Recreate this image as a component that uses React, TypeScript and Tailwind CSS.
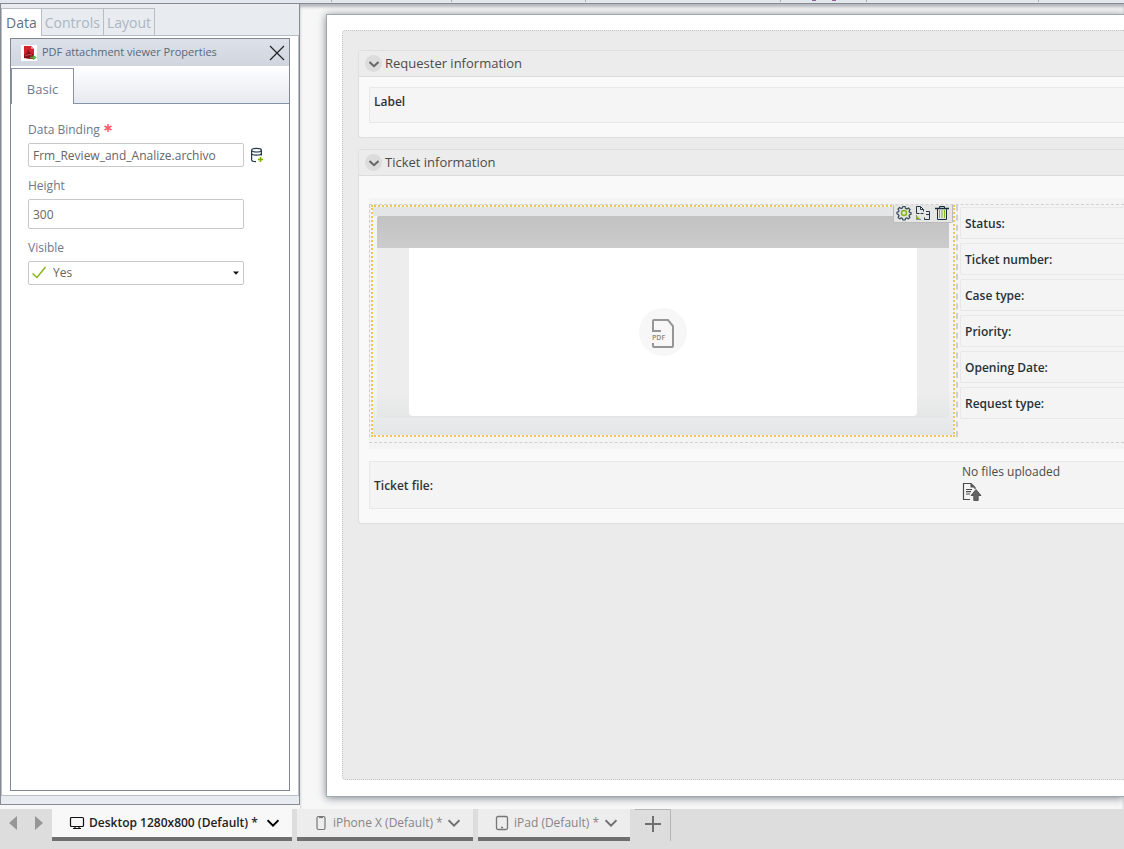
import React, { useState } from 'react';

const TICKET_FIELDS = ['Status:', 'Ticket number:', 'Case type:', 'Priority:', 'Opening Date:', 'Request type:'];

const Chevron = () => (
    <svg className="h-3 w-3" viewBox="0 0 12 12" fill="none" stroke="currentColor" strokeWidth="2">
        <path d="M0.5 3.2 6 8.7l5.5-5.5" />
    </svg>
);

const PdfFileIcon = () => (
    <svg className="h-4 w-4 bg-white" viewBox="0 0 16 16">
        <path d="M3 1h7l3 3v9l-3 1-7-1z" fill="#d3222b" />
        <path d="M10 1v3h3z" fill="#e98b8b" />
        <path d="M3 10c3-1 4-4 4-6 1 3 3 5 6 6v4l-10-1z" fill="#7d1218" />
        <path d="M4 11c2-1 4-2 7-1" stroke="#e0525a" fill="none" />
        <path d="M9 12.500h4M12 10.500l2.500 2-2.500 2" stroke="#4fae3a" strokeWidth="1.500" fill="none" />
    </svg>
);

const DatabaseAddIcon = () => (
    <svg className="h-4 w-4" viewBox="0 0 16 16" fill="none" stroke="#24384a" strokeWidth="1.200">
        <ellipse cx="6.500" cy="3.200" rx="4.900" ry="1.800" />
        <path d="M1.600 3.200v9.500c0 1 1.800 1.900 4.400 1.900M11.400 3.200v5.300M1.600 6.300c0 1 2.200 1.900 4.900 1.900s4.900-.9 4.900-1.900" />
        <path d="M10.500 10v5M8 12.500h5" stroke="#76b000" strokeWidth="1.500" />
    </svg>
);

const GearIcon = () => (
    <svg className="h-4 w-4" viewBox="0 0 16 16" fill="none" stroke="#34495a" strokeWidth="1.200">
        <path d="M6.900 1.500h2.200l.4 1.900 1.300.6 1.700-1 1.500 1.500-1 1.700.5 1.100 1.500.4v1.500l-1.500.5-.5 1.200.9 1.500-1.400 1.400-1.700-.9-1.200.6-.5 1.500H6.900l-.5-1.500-1.200-.6-1.700.9-1.400-1.400.9-1.500-.5-1.200L1 8.700V7.300l1.500-.5.5-1.100-1-1.700 1.500-1.500 1.700 1 1.300-.6z" />
        <circle cx="8" cy="8" r="2.500" stroke="#86b817" strokeWidth="1.500" />
    </svg>
);

const SwapIcon = () => (
    <svg className="h-4 w-4" viewBox="0 0 16 16" fill="none" stroke="#24384a">
        <path d="M4.500 8.500h-3v-7h4l3 3v2M5.500 1.500v3h3" />
        <path d="M11 6.500h3.500v8h-5v-2M11 9.500h3.500M5.500 8.500h3" />
        <path d="M1.500 10.500v4H6" strokeDasharray="1 1" />
        <path d="M1.500 14v-3.500l3.500 3.500z" fill="#86b817" stroke="none" />
    </svg>
);

const TrashIcon = () => (
    <svg className="h-4 w-4" viewBox="0 0 16 16" fill="none" stroke="#17303f">
        <path d="M1 3.500h14" strokeWidth="1.500" />
        <path d="M5.500 3V1.500h5V3M3.500 4v10.500h9V4" />
        <path d="M5.500 5v8M8 5v8M10.500 5v8" stroke="#86b817" />
    </svg>
);

const UploadIcon = () => (
    <svg className="h-5 w-5" viewBox="0 0 20 20" fill="none" stroke="#4a4a4a" strokeWidth="1.200">
        <path d="M8 17.500H1.500v-16h7.500l4 4v1.500" />
        <path d="M8.500 1.500v4h4.500z" fill="#555" stroke="none" />
        <path d="M4 7.500h6M4 9.700h5M4 12h4" />
        <path d="M14 7.500l5 6h-2.800v5h-4.400v-5H9z" fill="#666" stroke="#444" strokeWidth="0.800" />
    </svg>
);

const PdfPlaceholderIcon = () => (
    <svg className="h-8 w-8" viewBox="0 0 32 32" fill="none" stroke="#969696" strokeWidth="2">
        <path d="M14 15H6V5q0-1 1-1h14l5 6v20q0 1-1 1H7q-1 0-1-1v-3" />
        <text x="5" y="24" fontSize="7" fontWeight="600" fill="#888" stroke="none" fontFamily="Open Sans">
            PDF
        </text>
    </svg>
);

interface SectionProps {
    title: string;
    children: React.ReactNode;
}

const Section = ({ title, children }: SectionProps) => {
    const [open, setOpen] = useState(true);

    return (
        <section className="rounded-l border border-r-0 border-[#dfdfdf] bg-[#f9f9f9]">
            <h2 className={open ? 'border-b border-[#dcdcdc] bg-[#ececec]' : 'bg-[#ececec]'}>
                <button
                    className="flex h-[25px] items-center gap-[3px] pl-[6px] text-[13px] text-[#4b4b4b]"
                    aria-expanded={open}
                    onClick={() => setOpen(!open)}
                >
                    <span className="flex h-[17px] w-[17px] items-center justify-center rounded-full bg-[#dcdcdc]">
                        <svg className="h-[10px] w-[10px]" viewBox="0 0 10 10" fill="none" stroke="#666" strokeWidth="2">
                            <path d="M0.500 3 5 7.200 9.500 3" />
                        </svg>
                    </span>
                    {title}
                </button>
            </h2>
            {open && children}
        </section>
    );
};

const PropertiesPanel = () => {
    const [binding, setBinding] = useState('Frm_Review_and_Analize.archivo');
    const [height, setHeight] = useState('300');

    return (
        <div className="flex flex-1 flex-col border border-[#83878f] bg-white">
            <div className="flex h-[27px] items-center bg-linear-to-b from-[#dde1e9] to-[#d0d5df] pr-1 pl-[10px]">
                <PdfFileIcon />
                <h1 className="flex-1 pl-[5px] text-[11px] text-[#59687a]">PDF attachment viewer Properties</h1>
                <button aria-label="Close">
                    <svg className="h-4 w-4" viewBox="0 0 16 16" stroke="#222" strokeWidth="1.200">
                        <path d="M1 1l14 14M15 1 1 15" />
                    </svg>
                </button>
            </div>
            <div className="flex h-[38px] border-b border-[#8791a8] bg-linear-to-b from-white to-[#e6e9f0] pt-[2px]">
                <button className="-mb-px w-[63px] border border-b-0 border-[#8791a8] bg-white pt-[6px] text-[13px] text-[#6b7b90]">
                    Basic
                </button>
            </div>
            <form className="flex flex-col gap-[9px] px-[17px] pt-4 text-[12px] text-[#6e7887]">
                <div className="flex flex-col gap-[3px]">
                    <label htmlFor="binding" className="flex h-5 items-center gap-1">
                        Data Binding
                        <svg className="mb-1 h-2 w-2" viewBox="0 0 8 8" stroke="#fb5a6c" strokeWidth="1.500">
                            <path d="M4 0v8M0.500 2l7 4M7.500 2l-7 4" />
                        </svg>
                    </label>
                    <div className="flex items-center gap-[6px]">
                        <input
                            id="binding"
                            className="h-6 w-[216px] rounded-xs border border-[#c9c9c9] px-1 text-[#666]"
                            value={binding}
                            onChange={e => setBinding(e.target.value)}
                        />
                        <button type="button" aria-label="Select data binding">
                            <DatabaseAddIcon />
                        </button>
                    </div>
                </div>
                <div className="flex flex-col gap-[3px]">
                    <label htmlFor="height" className="h-5 leading-5">Height</label>
                    <input
                        id="height"
                        className="h-[30px] w-[216px] rounded-xs border border-[#c9c9c9] px-1 text-[#666]"
                        value={height}
                        onChange={e => setHeight(e.target.value)}
                    />
                </div>
                <div className="flex flex-col gap-[3px]">
                    <label htmlFor="visible" className="h-5 leading-5">Visible</label>
                    <div className="relative w-[216px]">
                        <select
                            id="visible"
                            className="block h-6 w-full appearance-none rounded-xs border border-[#c9c9c9] bg-white pl-6 text-[#666]"
                        >
                            <option>Yes</option>
                            <option>No</option>
                        </select>
                        <svg className="pointer-events-none absolute top-1 left-1 h-4 w-4" viewBox="0 0 16 16" fill="none" stroke="#86b817" strokeWidth="1.500">
                            <path d="M0.500 8.500 5 12.500 13.500 2" />
                        </svg>
                        <svg className="pointer-events-none absolute top-[10px] right-1 h-1 w-2" viewBox="0 0 8 4">
                            <path d="M1 0.500h6L4 3.800z" fill="#111" />
                        </svg>
                    </div>
                </div>
            </form>
        </div>
    );
};

const PdfPreview = () => (
    <div className="relative h-[232px] w-[589px] shrink-0 border-r-2 border-l border-dashed border-[#cfcfcf] pr-px pl-px">
        <div className="h-full border-2 border-dotted border-[#f0c94b] bg-[#f4f4f4]">
            <div className="flex h-full flex-col bg-[#e3e5e7]">
                <div className="h-[9px]" />
                <div className="flex-1 bg-linear-to-b from-[#f4f4f4] from-80% to-[#e3e5e7] px-1">
                    <div className="h-8 rounded-t-xs bg-linear-to-b from-[#c2c2c2] to-[#cccccc]" />
                    <div className="bg-linear-to-b from-[#ededed] from-85% to-[#e5e6e6] px-8 pb-[2px]">
                        <div className="flex h-[168px] items-center justify-center rounded-b bg-white">
                            <div className="flex h-12 w-12 items-center justify-center rounded-full bg-[#f7f7f7]">
                                <PdfPlaceholderIcon />
                            </div>
                        </div>
                    </div>
                </div>
            </div>
        </div>
        <div className="absolute top-0 right-[3px] flex h-[18px] items-center gap-[3px] rounded-b-xs border border-t-0 border-[#bababa] bg-[#e5e5e3] px-[2px] pb-[2px]">
            <button aria-label="Settings"><GearIcon /></button>
            <button aria-label="Convert"><SwapIcon /></button>
            <button aria-label="Delete"><TrashIcon /></button>
        </div>
    </div>
);

const FormCanvas = () => (
    <main className="flex min-w-0 flex-1 overflow-hidden bg-[#f7f7f7] pt-[10px] pb-3 pl-[26px] shadow-[inset_0_3px_3px_#b5b8bd]">
        <div className="flex min-w-0 flex-1 border border-r-0 border-[#a0a9b2] bg-white pt-[15px] pb-4 pl-[15px] shadow-[0_1px_8px_#7f868c]">
            <div className="flex min-w-0 flex-1 flex-col gap-[11px] rounded-l border border-r-0 border-dotted border-[#c4c4c4] bg-[#ebebeb] pt-[19px] pl-[15px]">
                <Section title="Requester information">
                    <div className="pt-[10px] pb-[14px] pl-[10px]">
                        <div className="h-9 rounded-l-xs border border-r-0 border-[#e8e8e8] bg-[#f5f5f5] px-1 pt-[5px] text-[12px] font-semibold text-[#333]">
                            Label
                        </div>
                    </div>
                </Section>
                <Section title="Ticket information">
                    <div className="flex flex-col gap-3 pt-[22px] pb-[14px] pl-[10px]">
                        <div className="bg-[#f4f4f4] py-[6px]">
                            <div className="flex h-[239px] border-y border-dashed border-[#d0d0d0]">
                                <PdfPreview />
                                <div className="flex flex-1 flex-col gap-1 pt-[2px] pl-[2px]">
                                    {TICKET_FIELDS.map(field => (
                                        <div
                                            key={field}
                                            className="flex h-8 items-center rounded-l-xs border border-r-0 border-[#e8e8e8] px-1 pt-[2px] text-[12px] font-semibold text-[#263238]"
                                        >
                                            {field}
                                        </div>
                                    ))}
                                </div>
                            </div>
                        </div>
                        <div className="flex h-12 border border-r-0 border-[#e8e8e8] bg-[#f4f4f4] text-[12px]">
                            <div className="flex w-[592px] shrink-0 items-center pt-[2px] pl-1 font-semibold text-[#333]">Ticket file:</div>
                            <div className="flex-1 text-[#4b4b4b]">
                                <p className="leading-5">No files uploaded</p>
                                <button aria-label="Upload file"><UploadIcon /></button>
                            </div>
                        </div>
                    </div>
                </Section>
            </div>
        </div>
    </main>
);

const DeviceTabs = () => (
    <nav className="flex h-10 shrink-0 items-start bg-[#dddddd] text-[12px]">
        <div className="flex h-7 w-[52px] shrink-0 items-center justify-between px-[9px]">
            <button aria-label="Previous">
                <svg className="h-[14px] w-2" viewBox="0 0 8 14"><path d="M8 0v14L0 7z" fill="#969696" /></svg>
            </button>
            <button aria-label="Next">
                <svg className="h-[14px] w-2" viewBox="0 0 8 14"><path d="M0 0v14l8-7z" fill="#969696" /></svg>
            </button>
        </div>
        <button className="mr-[5px] flex h-8 w-60 items-center border-b-4 border-[#6f6f6f] bg-[#f8f8f8] pl-[17px] font-semibold text-[#222]">
            <svg className="mr-1 h-4 w-4" viewBox="0 0 16 16" fill="none" stroke="#111" strokeWidth="1.200">
                <rect x="1.500" y="2.500" width="13" height="9" rx="1" />
                <path d="M6 11.500v2M10 11.500v2M4 13.500h8" />
            </svg>
            <span className="flex-1 text-left whitespace-nowrap">Desktop 1280x800 (Default) *</span>
            <span className="mr-[13px] text-black"><Chevron /></span>
        </button>
        <button className="mr-[5px] flex h-8 w-44 items-center border-b-4 border-[#6f6f6f] bg-[#ededed] pl-4 text-[#858585]">
            <svg className="mr-1 h-4 w-4" viewBox="0 0 16 16" fill="none" stroke="#777" strokeWidth="1.200">
                <rect x="4" y="1.500" width="8" height="13" rx="1.500" />
                <path d="M6 2.500h4" />
            </svg>
            <span className="flex-1 text-left whitespace-nowrap">iPhone X (Default) *</span>
            <span className="mr-[13px] text-[#6f6f6f]"><Chevron /></span>
        </button>
        <button className="mr-[5px] flex h-8 w-[152px] items-center border-b-4 border-[#6f6f6f] bg-[#ededed] pl-4 text-[#858585]">
            <svg className="mr-1 h-4 w-4" viewBox="0 0 16 16" fill="none" stroke="#777" strokeWidth="1.300">
                <rect x="2.500" y="1.500" width="11" height="13" rx="1.500" />
                <path d="M7 12.500h2" />
            </svg>
            <span className="flex-1 text-left whitespace-nowrap">iPad (Default) *</span>
            <span className="mr-[13px] text-[#6f6f6f]"><Chevron /></span>
        </button>
        <button aria-label="Add device" className="flex h-8 w-9 items-center justify-center border-t border-r border-[#b5b5b5] pb-1">
            <svg className="h-4 w-4" viewBox="0 0 16 16" stroke="#6f6f6f" strokeWidth="2"><path d="M8 0v16M0 8h16" /></svg>
        </button>
    </nav>
);

const App = () => {
    const [tab, setTab] = useState('Data');

    return (
        <div className="flex min-h-screen flex-col bg-[#f7f7f7] font-['Open_Sans',sans-serif]">
            {/* Bottom edge of the ribbon */}
            <div className="flex h-1 shrink-0 border-b border-[#868a93] bg-[#e3e7ee]">
                <div className="h-[2px] w-[332px] border-r border-[#a9adb5]" />
                <div className="h-[2px] w-[120px] border-r border-[#a9adb5]" />
                <div className="h-[2px] w-[134px] border-r border-[#a9adb5]" />
                <div className="h-[2px] w-[195px] border-r border-[#a9adb5]" />
                <div className="flex h-[2px] w-[86px] justify-center gap-4 border-r border-[#a9adb5]">
                    <span className="h-px w-1 bg-[#93609b]" />
                    <span className="h-px w-1 bg-[#93609b]" />
                </div>
                <div className="h-[2px] w-[172px] border-r border-[#a9adb5]" />
            </div>
            <div className="flex flex-1">
                <aside className="mb-1 flex w-[300px] shrink-0 flex-col border border-t-0 border-[#868a93] bg-[#e8ebf0] pb-2">
                    <div className="flex pt-1">
                        {['Data', 'Controls', 'Layout'].map(name => (
                            <button
                                key={name}
                                className={
                                    name === tab
                                        ? 'relative -mb-px h-7 border border-b-0 border-[#b9bdc4] bg-white px-1 text-[14px] text-[#5f7186]'
                                        : 'h-[27px] border border-b-0 border-l-0 border-[#b9bdc4] px-[3px] text-[14px] text-[#adb5bf]'
                                }
                                onClick={() => setTab(name)}
                            >
                                {name}
                            </button>
                        ))}
                    </div>
                    <div className="flex flex-1 flex-col border border-[#b9bdc4] bg-white px-2 pt-[2px] pb-1">
                        <PropertiesPanel />
                    </div>
                </aside>
                <FormCanvas />
            </div>
            <DeviceTabs />
        </div>
    );
};

export default App;
